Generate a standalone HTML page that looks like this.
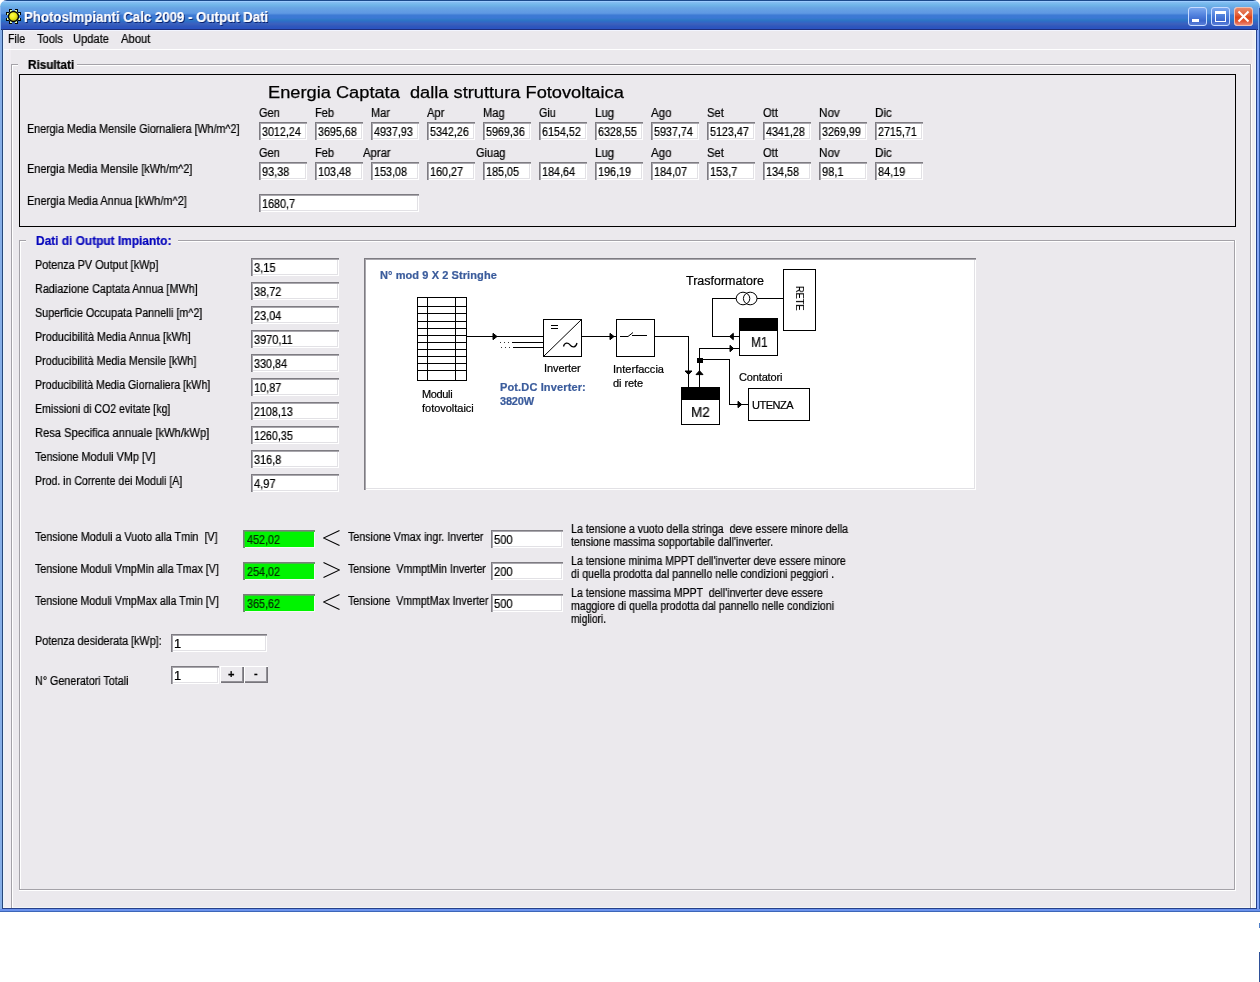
<!DOCTYPE html>
<html lang="it"><head><meta charset="utf-8"><title>PhotosImpianti Calc 2009 - Output Dati</title>
<style>
html,body{margin:0;padding:0;background:#fff;}
body{width:1260px;height:982px;position:relative;overflow:hidden;font-family:"Liberation Sans",sans-serif;color:#000;}
div,span,svg{position:absolute;box-sizing:border-box;}
.t{will-change:transform;-webkit-text-stroke:0.22px currentColor;white-space:pre;transform-origin:0 50%;display:block;}
.in{box-shadow:inset 1px 1px 0 #7e7c82,inset 2px 2px 0 #a9a7ad,inset -1px -1px 0 #fff,inset -2px -2px 0 #e2e1e5;}
.gl{background:#a4a2a8;}
.wl{background:#fff;}
.btn{background:#ebe9ed;box-shadow:inset 1px 1px 0 #fff,inset -1px -1px 0 #77757b,inset -2px -2px 0 #929096;}
.ing{box-shadow:inset 1px 1px 0 #7a807a,inset 2px 2px 0 #4fae4f,inset -1px -1px 0 #f4fbf4;}

</style></head>
<body>
<div id="client" style="left:0;top:8px;width:1260px;height:904px;background:#ebe9ed"></div>
<div id="titlebar" style="left:0;top:0;width:1260px;height:30px;border-radius:7px 7px 0 0;background:linear-gradient(to bottom,#1c4a8c 0px,#1c4a8c 1px,#9cccff 1px,#9cccff 2px,#86bef2 2px,#70b5e9 5px,#68a4e4 8px,#5f99e3 13px,#5590de 14px,#3d7ad4 15px,#3b78d4 18px,#2d78c4 20px,#3068c8 22px,#3d60bc 24px,#2f58bc 26px,#2a52c0 28.5px,#1e2e7a 29px,#1e2e7a 30px)"></div>
<div style="left:0;top:7px;width:1px;height:23px;background:#8ab6f0"></div>
<div style="left:0;top:30px;width:2px;height:882px;background:#86aee8"></div>
<div style="left:2px;top:29px;width:1px;height:880px;background:#27467a"></div>
<div style="left:3px;top:30px;width:1px;height:878px;background:#e6f4ff"></div>
<div style="left:1255px;top:30px;width:1px;height:878px;background:#ecfafa"></div>
<div style="left:1256px;top:29px;width:1px;height:880px;background:#27408b"></div>
<div style="left:1258px;top:7px;width:1px;height:23px;background:#7eacf2"></div>
<div style="left:1257px;top:30px;width:2px;height:882px;background:#86a8f8"></div>
<div style="left:1259px;top:8px;width:1px;height:904px;background:#2b57a8"></div>
<div style="left:2px;top:908px;width:1255px;height:1px;background:#27408b"></div>
<div style="left:0;top:909px;width:1260px;height:2px;background:#6a92ec"></div>
<div style="left:0;top:911px;width:1260px;height:1px;background:#3d66b8"></div>
<div style="left:1259px;top:923px;width:1px;height:5px;background:#4f7fc8"></div>
<div style="left:1259px;top:952px;width:1px;height:30px;background:#2f4f98"></div>
<div style="left:4px;top:31px;width:7px;height:877px;background:#f0edf2"></div>
<div style="left:1252px;top:31px;width:3px;height:877px;background:#efedf1"></div>
<div style="left:3px;top:907px;width:1253px;height:1px;background:#f3f6f5"></div>
<div style="left:4px;top:30px;width:1251px;height:1px;background:#f2f5ff"></div>
<div style="left:4px;top:49px;width:1251px;height:1px;background:#fff"></div>
<svg style="left:5px;top:8px" width="18" height="18" viewBox="5 8 18 18">
<g><rect x="9" y="9" width="3" height="3" fill="#050805"/><rect x="10" y="10" width="2" height="2" fill="#e4ffb0"/><rect x="15" y="9" width="3" height="3" fill="#050805"/><rect x="15" y="10" width="2" height="2" fill="#e4ffb0"/><rect x="6" y="12" width="3" height="3" fill="#050805"/><rect x="7" y="13" width="2" height="2" fill="#e4ffb0"/><rect x="18" y="12" width="3" height="3" fill="#050805"/><rect x="18" y="13" width="2" height="2" fill="#e4ffb0"/><rect x="6" y="18" width="3" height="3" fill="#050805"/><rect x="7" y="18" width="2" height="2" fill="#e4ffb0"/><rect x="18" y="18" width="3" height="3" fill="#050805"/><rect x="18" y="18" width="2" height="2" fill="#e4ffb0"/><rect x="9" y="21" width="3" height="3" fill="#050805"/><rect x="10" y="21" width="2" height="2" fill="#e4ffb0"/><rect x="15" y="21" width="3" height="3" fill="#050805"/><rect x="15" y="21" width="2" height="2" fill="#e4ffb0"/>
<defs><radialGradient id="sun" cx="0.38" cy="0.36" r="0.75"><stop offset="0" stop-color="#fcfc58"/><stop offset="0.5" stop-color="#f0ee14"/><stop offset="0.8" stop-color="#c8c81a"/><stop offset="1" stop-color="#8c8e1e"/></radialGradient></defs>
<circle cx="13.5" cy="16.5" r="5.7" fill="#050805"/>
<circle cx="13.5" cy="16.5" r="4.3" fill="url(#sun)"/>
</g></svg>
<span class="t" style="left:23.8px;top:9px;font-size:14px;line-height:16px;height:16px;font-weight:bold;color:#fff;transform:scaleX(0.9456);text-shadow:1px 1px 0 #0a1f6a;">PhotosImpianti Calc 2009 - Output Dati</span>
<div style="left:1188px;top:7px;width:19px;height:19px;border-radius:3px;border:1px solid #c8dcff;background:linear-gradient(to bottom,#7aa6ee 0%,#4f7fdc 45%,#3c66cc 75%,#5a7fd8 100%)"><div style="left:3px;top:11px;width:7px;height:3px;background:#fff"></div></div>
<div style="left:1211px;top:7px;width:19px;height:19px;border-radius:3px;border:1px solid #c8dcff;background:linear-gradient(to bottom,#7aa6ee 0%,#4f7fdc 45%,#3c66cc 75%,#5a7fd8 100%)"><div style="left:3px;top:3px;width:11px;height:11px;border:1px solid #fff;border-top-width:3px"></div></div>
<div style="left:1234px;top:7px;width:19px;height:19px;border-radius:3px;border:1px solid #c8dcff;background:linear-gradient(to bottom,#e88868 0%,#e0603a 40%,#de4416 55%,#e25a38 80%,#ee8878 100%)"><svg style="left:0;top:0" width="17" height="17" viewBox="0 0 17 17"><path d="M3.5,3.5 L13.5,13.5 M13.5,3.5 L3.5,13.5" stroke="#fff" stroke-width="2.1" fill="none"/></svg></div>
<div style="left:1234px;top:7px;width:19px;height:19px;border-radius:3px;border:1px solid #f0c0b0;"></div>
<span class="t" style="left:7.9px;top:32px;font-size:12px;line-height:14px;height:14px;transform:scaleX(0.8844);">File</span>
<span class="t" style="left:36.6px;top:32px;font-size:12px;line-height:14px;height:14px;transform:scaleX(0.9245);">Tools</span>
<span class="t" style="left:73.1px;top:32px;font-size:12px;line-height:14px;height:14px;transform:scaleX(0.9278);">Update</span>
<span class="t" style="left:120.6px;top:32px;font-size:12px;line-height:14px;height:14px;transform:scaleX(0.9375);">About</span>
<div class="gl" style="left:11px;top:64px;width:7px;height:1px"></div>
<div class="wl" style="left:12px;top:65px;width:6px;height:1px"></div>
<div class="gl" style="left:77px;top:64px;width:1174px;height:1px"></div>
<div class="wl" style="left:77px;top:65px;width:1173px;height:1px"></div>
<div class="gl" style="left:11px;top:64px;width:1px;height:844px"></div>
<div class="wl" style="left:12px;top:65px;width:1px;height:843px"></div>
<div class="gl" style="left:1250px;top:64px;width:1px;height:844px"></div>
<div class="wl" style="left:1251px;top:64px;width:1px;height:844px"></div>
<span class="t" style="left:28.4px;top:58px;font-size:12px;line-height:14px;height:14px;font-weight:bold;transform:scaleX(0.9760);">Risultati</span>
<div style="left:19px;top:74px;width:1217px;height:153px;border:1px solid #000"></div>
<span class="t" style="left:268.0px;top:84px;font-size:16px;line-height:17px;height:17px;transform:scaleX(1.1398);-webkit-text-stroke:0.25px #000;">Energia Captata &nbsp;dalla struttura Fotovoltaica</span>
<span class="t" style="left:259.3px;top:106px;font-size:12px;line-height:14px;height:14px;transform:scaleX(0.9170);">Gen</span>
<div class="in" style="left:259px;top:122px;width:48px;height:18px;background:#fff"></div>
<span class="t" style="left:262.2px;top:125px;font-size:12px;line-height:14px;height:14px;transform:scaleX(0.8945);">3012,24</span>
<span class="t" style="left:315.3px;top:106px;font-size:12px;line-height:14px;height:14px;transform:scaleX(0.9189);">Feb</span>
<div class="in" style="left:315px;top:122px;width:48px;height:18px;background:#fff"></div>
<span class="t" style="left:318.2px;top:125px;font-size:12px;line-height:14px;height:14px;transform:scaleX(0.8945);">3695,68</span>
<span class="t" style="left:371.3px;top:106px;font-size:12px;line-height:14px;height:14px;transform:scaleX(0.9145);">Mar</span>
<div class="in" style="left:371px;top:122px;width:48px;height:18px;background:#fff"></div>
<span class="t" style="left:374.2px;top:125px;font-size:12px;line-height:14px;height:14px;transform:scaleX(0.8945);">4937,93</span>
<span class="t" style="left:427.3px;top:106px;font-size:12px;line-height:14px;height:14px;transform:scaleX(0.9264);">Apr</span>
<div class="in" style="left:427px;top:122px;width:48px;height:18px;background:#fff"></div>
<span class="t" style="left:430.2px;top:125px;font-size:12px;line-height:14px;height:14px;transform:scaleX(0.8945);">5342,26</span>
<span class="t" style="left:483.3px;top:106px;font-size:12px;line-height:14px;height:14px;transform:scaleX(0.9253);">Mag</span>
<div class="in" style="left:483px;top:122px;width:48px;height:18px;background:#fff"></div>
<span class="t" style="left:486.2px;top:125px;font-size:12px;line-height:14px;height:14px;transform:scaleX(0.8945);">5969,36</span>
<span class="t" style="left:539.3px;top:106px;font-size:12px;line-height:14px;height:14px;transform:scaleX(0.8997);">Giu</span>
<div class="in" style="left:539px;top:122px;width:48px;height:18px;background:#fff"></div>
<span class="t" style="left:542.2px;top:125px;font-size:12px;line-height:14px;height:14px;transform:scaleX(0.8945);">6154,52</span>
<span class="t" style="left:595.3px;top:106px;font-size:12px;line-height:14px;height:14px;transform:scaleX(0.9590);">Lug</span>
<div class="in" style="left:595px;top:122px;width:48px;height:18px;background:#fff"></div>
<span class="t" style="left:598.2px;top:125px;font-size:12px;line-height:14px;height:14px;transform:scaleX(0.8945);">6328,55</span>
<span class="t" style="left:651.3px;top:106px;font-size:12px;line-height:14px;height:14px;transform:scaleX(0.9601);">Ago</span>
<div class="in" style="left:651px;top:122px;width:48px;height:18px;background:#fff"></div>
<span class="t" style="left:654.2px;top:125px;font-size:12px;line-height:14px;height:14px;transform:scaleX(0.8945);">5937,74</span>
<span class="t" style="left:707.3px;top:106px;font-size:12px;line-height:14px;height:14px;transform:scaleX(0.9327);">Set</span>
<div class="in" style="left:707px;top:122px;width:48px;height:18px;background:#fff"></div>
<span class="t" style="left:710.2px;top:125px;font-size:12px;line-height:14px;height:14px;transform:scaleX(0.8945);">5123,47</span>
<span class="t" style="left:763.3px;top:106px;font-size:12px;line-height:14px;height:14px;transform:scaleX(0.9311);">Ott</span>
<div class="in" style="left:763px;top:122px;width:48px;height:18px;background:#fff"></div>
<span class="t" style="left:766.2px;top:125px;font-size:12px;line-height:14px;height:14px;transform:scaleX(0.8945);">4341,28</span>
<span class="t" style="left:819.3px;top:106px;font-size:12px;line-height:14px;height:14px;transform:scaleX(0.9747);">Nov</span>
<div class="in" style="left:819px;top:122px;width:48px;height:18px;background:#fff"></div>
<span class="t" style="left:822.2px;top:125px;font-size:12px;line-height:14px;height:14px;transform:scaleX(0.8945);">3269,99</span>
<span class="t" style="left:875.3px;top:106px;font-size:12px;line-height:14px;height:14px;transform:scaleX(0.9693);">Dic</span>
<div class="in" style="left:875px;top:122px;width:48px;height:18px;background:#fff"></div>
<span class="t" style="left:878.2px;top:125px;font-size:12px;line-height:14px;height:14px;transform:scaleX(0.8945);">2715,71</span>
<span class="t" style="left:259.3px;top:146px;font-size:12px;line-height:14px;height:14px;transform:scaleX(0.9170);">Gen</span>
<span class="t" style="left:315.3px;top:146px;font-size:12px;line-height:14px;height:14px;transform:scaleX(0.9189);">Feb</span>
<span class="t" style="left:363.3px;top:146px;font-size:12px;line-height:14px;height:14px;transform:scaleX(0.9406);">Aprar</span>
<span class="t" style="left:475.8px;top:146px;font-size:12px;line-height:14px;height:14px;transform:scaleX(0.9181);">Giuag</span>
<span class="t" style="left:595.3px;top:146px;font-size:12px;line-height:14px;height:14px;transform:scaleX(0.9590);">Lug</span>
<span class="t" style="left:651.3px;top:146px;font-size:12px;line-height:14px;height:14px;transform:scaleX(0.9601);">Ago</span>
<span class="t" style="left:707.3px;top:146px;font-size:12px;line-height:14px;height:14px;transform:scaleX(0.9327);">Set</span>
<span class="t" style="left:763.3px;top:146px;font-size:12px;line-height:14px;height:14px;transform:scaleX(0.9311);">Ott</span>
<span class="t" style="left:819.3px;top:146px;font-size:12px;line-height:14px;height:14px;transform:scaleX(0.9747);">Nov</span>
<span class="t" style="left:875.3px;top:146px;font-size:12px;line-height:14px;height:14px;transform:scaleX(0.9693);">Dic</span>
<div class="in" style="left:259px;top:162px;width:48px;height:18px;background:#fff"></div>
<span class="t" style="left:262.2px;top:165px;font-size:12px;line-height:14px;height:14px;transform:scaleX(0.9091);">93,38</span>
<div class="in" style="left:315px;top:162px;width:48px;height:18px;background:#fff"></div>
<span class="t" style="left:318.2px;top:165px;font-size:12px;line-height:14px;height:14px;transform:scaleX(0.9005);">103,48</span>
<div class="in" style="left:371px;top:162px;width:48px;height:18px;background:#fff"></div>
<span class="t" style="left:374.2px;top:165px;font-size:12px;line-height:14px;height:14px;transform:scaleX(0.9005);">153,08</span>
<div class="in" style="left:427px;top:162px;width:48px;height:18px;background:#fff"></div>
<span class="t" style="left:430.2px;top:165px;font-size:12px;line-height:14px;height:14px;transform:scaleX(0.9005);">160,27</span>
<div class="in" style="left:483px;top:162px;width:48px;height:18px;background:#fff"></div>
<span class="t" style="left:486.2px;top:165px;font-size:12px;line-height:14px;height:14px;transform:scaleX(0.9005);">185,05</span>
<div class="in" style="left:539px;top:162px;width:48px;height:18px;background:#fff"></div>
<span class="t" style="left:542.2px;top:165px;font-size:12px;line-height:14px;height:14px;transform:scaleX(0.9005);">184,64</span>
<div class="in" style="left:595px;top:162px;width:48px;height:18px;background:#fff"></div>
<span class="t" style="left:598.2px;top:165px;font-size:12px;line-height:14px;height:14px;transform:scaleX(0.9005);">196,19</span>
<div class="in" style="left:651px;top:162px;width:48px;height:18px;background:#fff"></div>
<span class="t" style="left:654.2px;top:165px;font-size:12px;line-height:14px;height:14px;transform:scaleX(0.9005);">184,07</span>
<div class="in" style="left:707px;top:162px;width:48px;height:18px;background:#fff"></div>
<span class="t" style="left:710.2px;top:165px;font-size:12px;line-height:14px;height:14px;transform:scaleX(0.9091);">153,7</span>
<div class="in" style="left:763px;top:162px;width:48px;height:18px;background:#fff"></div>
<span class="t" style="left:766.2px;top:165px;font-size:12px;line-height:14px;height:14px;transform:scaleX(0.9005);">134,58</span>
<div class="in" style="left:819px;top:162px;width:48px;height:18px;background:#fff"></div>
<span class="t" style="left:822.2px;top:165px;font-size:12px;line-height:14px;height:14px;transform:scaleX(0.9227);">98,1</span>
<div class="in" style="left:875px;top:162px;width:48px;height:18px;background:#fff"></div>
<span class="t" style="left:878.2px;top:165px;font-size:12px;line-height:14px;height:14px;transform:scaleX(0.9091);">84,19</span>
<span class="t" style="left:26.6px;top:122px;font-size:12px;line-height:14px;height:14px;transform:scaleX(0.8935);">Energia Media Mensile Giornaliera [Wh/m^2]</span>
<span class="t" style="left:26.6px;top:162px;font-size:12px;line-height:14px;height:14px;transform:scaleX(0.9103);">Energia Media Mensile [kWh/m^2]</span>
<span class="t" style="left:26.6px;top:194px;font-size:12px;line-height:14px;height:14px;transform:scaleX(0.9163);">Energia Media Annua [kWh/m^2]</span>
<div class="in" style="left:259px;top:194px;width:160px;height:18px;background:#fff"></div>
<span class="t" style="left:262.2px;top:197px;font-size:12px;line-height:14px;height:14px;transform:scaleX(0.9005);">1680,7</span>
<div class="gl" style="left:19px;top:240px;width:7px;height:1px"></div>
<div class="wl" style="left:20px;top:241px;width:6px;height:1px"></div>
<div class="gl" style="left:178px;top:240px;width:1057px;height:1px"></div>
<div class="wl" style="left:178px;top:241px;width:1056px;height:1px"></div>
<div class="gl" style="left:19px;top:240px;width:1px;height:650px"></div>
<div class="wl" style="left:20px;top:241px;width:1px;height:649px"></div>
<div class="gl" style="left:1234px;top:240px;width:1px;height:650px"></div>
<div class="wl" style="left:1235px;top:240px;width:1px;height:651px"></div>
<div class="gl" style="left:19px;top:889px;width:1216px;height:1px"></div>
<div class="wl" style="left:19px;top:890px;width:1217px;height:1px"></div>
<span class="t" style="left:36.1px;top:234px;font-size:12px;line-height:14px;height:14px;font-weight:bold;color:#0606bc;transform:scaleX(0.9909);">Dati di Output Impianto:</span>
<span class="t" style="left:35.1px;top:258px;font-size:12px;line-height:14px;height:14px;transform:scaleX(0.9017);">Potenza PV Output [kWp]</span>
<div class="in" style="left:251px;top:258px;width:88px;height:18px;background:#fff"></div>
<span class="t" style="left:254.2px;top:261px;font-size:12px;line-height:14px;height:14px;transform:scaleX(0.9227);">3,15</span>
<span class="t" style="left:35.1px;top:282px;font-size:12px;line-height:14px;height:14px;transform:scaleX(0.9000);">Radiazione Captata Annua [MWh]</span>
<div class="in" style="left:251px;top:282px;width:88px;height:18px;background:#fff"></div>
<span class="t" style="left:254.2px;top:285px;font-size:12px;line-height:14px;height:14px;transform:scaleX(0.9091);">38,72</span>
<span class="t" style="left:35.1px;top:306px;font-size:12px;line-height:14px;height:14px;transform:scaleX(0.8976);">Superficie Occupata Pannelli [m^2]</span>
<div class="in" style="left:251px;top:306px;width:88px;height:18px;background:#fff"></div>
<span class="t" style="left:254.2px;top:309px;font-size:12px;line-height:14px;height:14px;transform:scaleX(0.9091);">23,04</span>
<span class="t" style="left:35.1px;top:330px;font-size:12px;line-height:14px;height:14px;transform:scaleX(0.9013);">Producibilità Media Annua [kWh]</span>
<div class="in" style="left:251px;top:330px;width:88px;height:18px;background:#fff"></div>
<span class="t" style="left:254.2px;top:333px;font-size:12px;line-height:14px;height:14px;transform:scaleX(0.9132);">3970,11</span>
<span class="t" style="left:35.1px;top:354px;font-size:12px;line-height:14px;height:14px;transform:scaleX(0.8958);">Producibilità Media Mensile [kWh]</span>
<div class="in" style="left:251px;top:354px;width:88px;height:18px;background:#fff"></div>
<span class="t" style="left:254.2px;top:357px;font-size:12px;line-height:14px;height:14px;transform:scaleX(0.9005);">330,84</span>
<span class="t" style="left:35.1px;top:378px;font-size:12px;line-height:14px;height:14px;transform:scaleX(0.8880);">Producibilità Media Giornaliera [kWh]</span>
<div class="in" style="left:251px;top:378px;width:88px;height:18px;background:#fff"></div>
<span class="t" style="left:254.2px;top:381px;font-size:12px;line-height:14px;height:14px;transform:scaleX(0.9091);">10,87</span>
<span class="t" style="left:35.1px;top:402px;font-size:12px;line-height:14px;height:14px;transform:scaleX(0.8821);">Emissioni di CO2 evitate [kg]</span>
<div class="in" style="left:251px;top:402px;width:88px;height:18px;background:#fff"></div>
<span class="t" style="left:254.2px;top:405px;font-size:12px;line-height:14px;height:14px;transform:scaleX(0.8945);">2108,13</span>
<span class="t" style="left:35.1px;top:426px;font-size:12px;line-height:14px;height:14px;transform:scaleX(0.9300);">Resa Specifica annuale [kWh/kWp]</span>
<div class="in" style="left:251px;top:426px;width:88px;height:18px;background:#fff"></div>
<span class="t" style="left:254.2px;top:429px;font-size:12px;line-height:14px;height:14px;transform:scaleX(0.8945);">1260,35</span>
<span class="t" style="left:35.1px;top:450px;font-size:12px;line-height:14px;height:14px;transform:scaleX(0.9063);">Tensione Moduli VMp [V]</span>
<div class="in" style="left:251px;top:450px;width:88px;height:18px;background:#fff"></div>
<span class="t" style="left:254.2px;top:453px;font-size:12px;line-height:14px;height:14px;transform:scaleX(0.9091);">316,8</span>
<span class="t" style="left:35.1px;top:474px;font-size:12px;line-height:14px;height:14px;transform:scaleX(0.8799);">Prod. in Corrente dei Moduli [A]</span>
<div class="in" style="left:251px;top:474px;width:88px;height:18px;background:#fff"></div>
<span class="t" style="left:254.2px;top:477px;font-size:12px;line-height:14px;height:14px;transform:scaleX(0.9227);">4,97</span>
<div class="in" style="left:364px;top:258px;width:612px;height:232px;background:#fff"></div>
<svg style="left:364px;top:258px" width="612" height="232" viewBox="364 258 612 232" fill="none" stroke="#000" stroke-width="1" shape-rendering="crispEdges">
<!-- PV module grid -->
<rect x="417.5" y="297.5" width="49" height="83"/>
<path d="M427.5,297V381 M455.5,297V381 M417,306.5H467 M417,313.5H467 M417,321.5H467 M417,328.5H467 M417,335.5H467 M417,342.5H467 M417,349.5H467 M417,356.5H467 M417,363.5H467 M417,370.5H467"/>
<!-- strings to inverter -->
<path d="M467,336.5H543 M512,342.5H543 M513,347.5H543"/>
<path d="M500,342.5h1 M504,342.5h1 M508,342.5h1 M501,347.5h1 M505,347.5h1 M509,347.5h1" stroke="#333"/>
<path d="M493,333.3 L497,336.5 L493,339.7Z" fill="#000" shape-rendering="geometricPrecision"/>
<!-- inverter -->
<rect x="543.5" y="319.5" width="38" height="37"/>
<path d="M543.5,356.5 L581.5,319.5" shape-rendering="geometricPrecision"/>
<path d="M551,325.5H558 M551,328.5H558"/>
<path d="M563.5,346.5 C564.5,342.3 568,342.3 570,344.8 C572,347.6 575.8,348 577,343" stroke-width="1.25" shape-rendering="geometricPrecision"/>
<!-- inverter -> interface -->
<path d="M582,336.5H616"/>
<path d="M610,333.3 L614,336.5 L610,339.7Z" fill="#000" shape-rendering="geometricPrecision"/>
<rect x="616.5" y="319.5" width="38" height="37"/>
<path d="M620,336.5H628 M632,335.5H647"/>
<path d="M628,336.5 L633,332.5" shape-rendering="geometricPrecision"/>
<!-- interface -> M2 -->
<path d="M655,336.5H688.5V387"/>
<path d="M685,371 L692,371 L688.5,374.6Z" fill="#000" shape-rendering="geometricPrecision"/>
<!-- M2 -->
<rect x="681.5" y="387.5" width="38" height="37"/>
<rect x="681" y="387" width="39" height="13" fill="#000" stroke="none"/>
<!-- M2 -> M1 -->
<path d="M699.5,387V348.5H739"/>
<path d="M696,374.6 L703,374.6 L699.5,370.8Z" fill="#000" shape-rendering="geometricPrecision"/>
<path d="M730,345.3 L733.6,348.5 L730,351.7Z" fill="#000" shape-rendering="geometricPrecision"/>
<rect x="697" y="358" width="6" height="5" fill="#000" stroke="none"/>
<!-- node -> UTENZA -->
<path d="M703,359.5H729.5V404.5H748"/>
<path d="M738,401.3 L741.7,404.5 L738,407.7Z" fill="#000" shape-rendering="geometricPrecision"/>
<rect x="748.5" y="388.5" width="61" height="32"/>
<!-- M1 -->
<rect x="739.5" y="318.5" width="38" height="37"/>
<rect x="739" y="318" width="39" height="13" fill="#000" stroke="none"/>
<!-- M1 -> trasformatore -> RETE -->
<path d="M739,336.5H712.5V298.5H736 M757,298.5H783"/>
<path d="M733.3,333.3 L729.6,336.5 L733.3,339.7Z" fill="#000" shape-rendering="geometricPrecision"/>
<g shape-rendering="geometricPrecision"><ellipse cx="743" cy="298.5" rx="6.8" ry="6.3"/><ellipse cx="750.2" cy="298.5" rx="6.8" ry="6.3"/></g>
<rect x="783.5" y="269.5" width="32" height="61"/>
</svg>

<span class="t" style="left:35.3px;top:530px;font-size:12px;line-height:14px;height:14px;transform:scaleX(0.8942);">Tensione Moduli a Vuoto alla Tmin &nbsp;[V]</span>
<div class="ing" style="left:243px;top:530px;width:72px;height:18px;background:#00f400"></div>
<span class="t" style="left:246.9px;top:533px;font-size:12px;line-height:14px;height:14px;color:#062806;transform:scaleX(0.9005);">452,02</span>
<svg style="left:323px;top:530px" width="17" height="16" viewBox="0 0 17 16"><polyline points="16.5,0.5 0.5,8 16.5,15.5" fill="none" stroke="#000" stroke-width="1.1" stroke-linejoin="miter"/></svg>
<span class="t" style="left:347.6px;top:530px;font-size:12px;line-height:14px;height:14px;transform:scaleX(0.8904);">Tensione Vmax ingr. Inverter</span>
<div class="in" style="left:491px;top:530px;width:72px;height:18px;background:#fff"></div>
<span class="t" style="left:494.2px;top:533px;font-size:12px;line-height:14px;height:14px;transform:scaleX(0.9315);">500</span>
<span class="t" style="left:35.3px;top:562px;font-size:12px;line-height:14px;height:14px;transform:scaleX(0.8871);">Tensione Moduli VmpMin alla Tmax [V]</span>
<div class="ing" style="left:243px;top:562px;width:72px;height:18px;background:#00f400"></div>
<span class="t" style="left:246.9px;top:565px;font-size:12px;line-height:14px;height:14px;color:#062806;transform:scaleX(0.9005);">254,02</span>
<svg style="left:323px;top:562px" width="17" height="16" viewBox="0 0 17 16"><polyline points="0.5,0.5 16.5,8 0.5,15.5" fill="none" stroke="#000" stroke-width="1.1" stroke-linejoin="miter"/></svg>
<span class="t" style="left:347.6px;top:562px;font-size:12px;line-height:14px;height:14px;transform:scaleX(0.8836);">Tensione &nbsp;VmmptMin Inverter</span>
<div class="in" style="left:491px;top:562px;width:72px;height:18px;background:#fff"></div>
<span class="t" style="left:494.2px;top:565px;font-size:12px;line-height:14px;height:14px;transform:scaleX(0.9315);">200</span>
<span class="t" style="left:35.3px;top:594px;font-size:12px;line-height:14px;height:14px;transform:scaleX(0.8871);">Tensione Moduli VmpMax alla Tmin [V]</span>
<div class="ing" style="left:243px;top:594px;width:72px;height:18px;background:#00f400"></div>
<span class="t" style="left:246.9px;top:597px;font-size:12px;line-height:14px;height:14px;color:#062806;transform:scaleX(0.9005);">365,62</span>
<svg style="left:323px;top:594px" width="17" height="16" viewBox="0 0 17 16"><polyline points="16.5,0.5 0.5,8 16.5,15.5" fill="none" stroke="#000" stroke-width="1.1" stroke-linejoin="miter"/></svg>
<span class="t" style="left:347.6px;top:594px;font-size:12px;line-height:14px;height:14px;transform:scaleX(0.8808);">Tensione &nbsp;VmmptMax Inverter</span>
<div class="in" style="left:491px;top:594px;width:72px;height:18px;background:#fff"></div>
<span class="t" style="left:494.2px;top:597px;font-size:12px;line-height:14px;height:14px;transform:scaleX(0.9315);">500</span>
<span class="t" style="left:571.0px;top:522.3px;font-size:12px;line-height:14px;height:14px;transform:scaleX(0.8835);">La tensione a vuoto della stringa &nbsp;deve essere minore della</span>
<span class="t" style="left:571.0px;top:535.3px;font-size:12px;line-height:14px;height:14px;transform:scaleX(0.8691);">tensione massima sopportabile dall&#x27;inverter.</span>
<span class="t" style="left:571.0px;top:554.3px;font-size:12px;line-height:14px;height:14px;transform:scaleX(0.8765);">La tensione minima MPPT dell&#x27;inverter deve essere minore</span>
<span class="t" style="left:571.0px;top:567.3px;font-size:12px;line-height:14px;height:14px;transform:scaleX(0.8819);">di quella prodotta dal pannello nelle condizioni peggiori .</span>
<span class="t" style="left:571.0px;top:586.3px;font-size:12px;line-height:14px;height:14px;transform:scaleX(0.8798);">La tensione massima MPPT &nbsp;dell&#x27;inverter deve essere</span>
<span class="t" style="left:571.0px;top:599.3px;font-size:12px;line-height:14px;height:14px;transform:scaleX(0.8800);">maggiore di quella prodotta dal pannello nelle condizioni</span>
<span class="t" style="left:571.0px;top:612.3px;font-size:12px;line-height:14px;height:14px;transform:scaleX(0.8467);">migliori.</span>
<span class="t" style="left:35.3px;top:634px;font-size:12px;line-height:14px;height:14px;transform:scaleX(0.9002);">Potenza desiderata [kWp]:</span>
<div class="in" style="left:171px;top:634px;width:96px;height:18px;background:#fff"></div>
<span class="t" style="left:174.2px;top:637px;font-size:12px;line-height:14px;height:14px;transform:scaleX(1.0713);">1</span>
<span class="t" style="left:35.3px;top:674px;font-size:12px;line-height:14px;height:14px;transform:scaleX(0.8937);">N° Generatori Totali</span>
<div class="in" style="left:171px;top:666px;width:48px;height:18px;background:#fff"></div>
<span class="t" style="left:174.2px;top:669px;font-size:12px;line-height:14px;height:14px;transform:scaleX(1.0713);">1</span>
<div class="btn" style="left:220px;top:666px;width:24px;height:17px"></div>
<div class="btn" style="left:244px;top:666px;width:24px;height:17px"></div>
<span class="t" style="left:227.6px;top:668px;font-size:11px;line-height:12px;height:12px;font-weight:bold;">+</span>
<span class="t" style="left:253.8px;top:667px;font-size:11px;line-height:12px;height:12px;font-weight:bold;">-</span>
<span class="t" style="left:380.1px;top:269px;font-size:11px;line-height:12px;height:12px;font-weight:bold;color:#3b5c9c;letter-spacing:0.089px;">N° mod 9 X 2 Stringhe</span>
<span class="t" style="left:422.3px;top:388px;font-size:11px;line-height:12px;height:12px;letter-spacing:-0.367px;">Moduli</span>
<span class="t" style="left:422.3px;top:401.7px;font-size:11px;line-height:12px;height:12px;letter-spacing:-0.023px;">fotovoltaici</span>
<span class="t" style="left:544.3px;top:361.7px;font-size:11px;line-height:12px;height:12px;letter-spacing:-0.074px;">Inverter</span>
<span class="t" style="left:500.4px;top:381px;font-size:11px;line-height:12px;height:12px;font-weight:bold;color:#3b5c9c;letter-spacing:0.135px;">Pot.DC Inverter:</span>
<span class="t" style="left:500.4px;top:394.7px;font-size:11px;line-height:12px;height:12px;font-weight:bold;color:#3b5c9c;letter-spacing:-0.211px;">3820W</span>
<span class="t" style="left:613.3px;top:363.2px;font-size:11px;line-height:12px;height:12px;letter-spacing:0.023px;">Interfaccia</span>
<span class="t" style="left:613.3px;top:377.2px;font-size:11px;line-height:12px;height:12px;letter-spacing:-0.067px;">di rete</span>
<span class="t" style="left:686.3px;top:273.6px;font-size:12.5px;line-height:14px;height:14px;letter-spacing:-0.002px;">Trasformatore</span>
<span class="t" style="left:751.4px;top:333.8px;font-size:14px;line-height:16px;height:16px;transform:scaleX(0.8535);">M1</span>
<span class="t" style="left:690.9px;top:404px;font-size:14px;line-height:16px;height:16px;transform:scaleX(0.9615);">M2</span>
<span class="t" style="left:739.2px;top:370.8px;font-size:11px;line-height:12px;height:12px;letter-spacing:-0.148px;">Contatori</span>
<span class="t" style="left:752.0px;top:398.8px;font-size:11px;line-height:12px;height:12px;letter-spacing:-0.500px;">UTENZA</span>
<span class="t" style="left:797.4px;top:285.5px;font-size:11.5px;line-height:12px;height:12px;transform-origin:0 0;transform:translate(9px,0) rotate(90deg) scaleX(0.8)">RETE</span>
</body></html>
